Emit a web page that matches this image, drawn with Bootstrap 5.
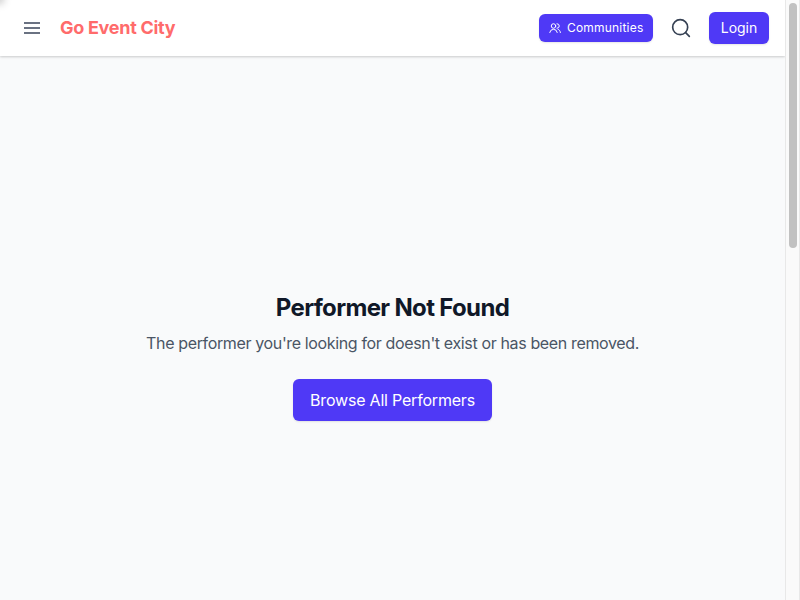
<!DOCTYPE html>
<html lang="en">
<head>
<meta charset="utf-8">
<meta name="viewport" content="width=device-width, initial-scale=1">
<title>Go Event City</title>
<link href="https://cdn.jsdelivr.net/npm/bootstrap@5.3.0/dist/css/bootstrap.min.css" rel="stylesheet">
<style>
body { font-family: Inter, "Liberation Sans", sans-serif; background: #f9fafb; color: #101828; }
.page-main { min-width: 0; }
.topbar { height: 56px; padding: 0 16px 0 24px; box-shadow: 0 1px 3px rgba(0,0,0,.1), 0 1px 2px rgba(0,0,0,.1); }
.corner-glow { width: 1px; height: 1px; left: -2px; top: -2px; box-shadow: 0 0 8px 4px rgba(0,0,0,.3); }
.brand { color: #ff6b6b; font-size: 18px; line-height: 28px; letter-spacing: -.28px; margin-left: 20px; }
.btn-brand { --bs-btn-color: #fff; --bs-btn-bg: #4f39f6; --bs-btn-hover-bg: #432dd7; --bs-btn-hover-color: #fff; --bs-btn-border-width: 0; --bs-btn-border-radius: 6px; box-shadow: 0 1px 2px rgba(0,0,0,.1); white-space: nowrap; }
.btn-communities { width: 114px; height: 28px; font-size: 12px; padding: 0 0 0 10px; gap: 6px; letter-spacing: .2px; }
.btn-login { width: 60px; height: 32px; font-size: 14px; line-height: 20px; padding: 0 0 1px; }
.search { margin: 0 18px; color: #364153; }
.message { padding-top: 236px; }
.message h1 { font-size: 24px; line-height: 32px; letter-spacing: -.66px; margin-bottom: 7px; }
.message p { font-size: 16px; line-height: 24px; color: #4a5565; margin-bottom: 24px; letter-spacing: -.36px; }
.btn-browse { width: 199px; height: 42px; font-size: 16px; padding: 0; letter-spacing: -.2px; }
.scroll-track { width: 15px; background: #fafafa; border-left: 1px solid #e8e8e8; border-right: 1px solid #e8e8e8; padding: 3px 0 0 3px; }
.scroll-thumb { width: 8px; height: 245px; background: #c1c1c1; border-radius: 4px; }
</style>
</head>
<body class="d-flex vh-100 overflow-hidden">
<div class="page-main flex-grow-1 d-flex flex-column position-relative overflow-hidden">
  <nav class="topbar d-flex align-items-center bg-white flex-shrink-0">
    <svg width="16" height="16" viewBox="0 0 16 16" stroke="#6a7282" stroke-width="2" aria-label="Menu"><path d="M0 3h16M0 8h16M0 13h16"/></svg>
    <a class="brand fw-bold text-decoration-none" href="#">Go Event City</a>
    <div class="ms-auto d-flex align-items-center">
      <button class="btn btn-brand btn-communities d-flex align-items-center">
        <svg width="12" height="12" viewBox="0 0 24 24" fill="none" stroke="currentColor" stroke-width="2" stroke-linecap="round" stroke-linejoin="round"><circle cx="9" cy="8" r="4.5"/><path d="M1.5 21a7.6 7.6 0 0 1 15 0M16 3.5a4.5 4.5 0 0 1 0 9M18 14.5c2.7 1 4.5 3.3 4.8 6.5"/></svg>
        <span>Communities</span>
      </button>
      <svg class="search" width="20" height="20" viewBox="0 0 24 24" fill="none" stroke="currentColor" stroke-width="2" stroke-linecap="round" aria-label="Search"><circle cx="11" cy="11" r="9"/><path d="m17.6 17.6 4.4 4.4"/></svg>
      <button class="btn btn-brand btn-login">Login</button>
    </div>
  </nav>
  <span class="corner-glow position-absolute rounded-circle"></span>
  <main class="message text-center">
    <h1 class="fw-bold">Performer Not Found</h1>
    <p>The performer you're looking for doesn't exist or has been removed.</p>
    <a class="btn btn-brand btn-browse d-inline-flex align-items-center justify-content-center" href="#">Browse All Performers</a>
  </main>
</div>
<div class="scroll-track flex-shrink-0" aria-hidden="true"><div class="scroll-thumb"></div></div>
<script src="https://cdn.jsdelivr.net/npm/bootstrap@5.3.0/dist/js/bootstrap.bundle.min.js"></script>
</body>
</html>
